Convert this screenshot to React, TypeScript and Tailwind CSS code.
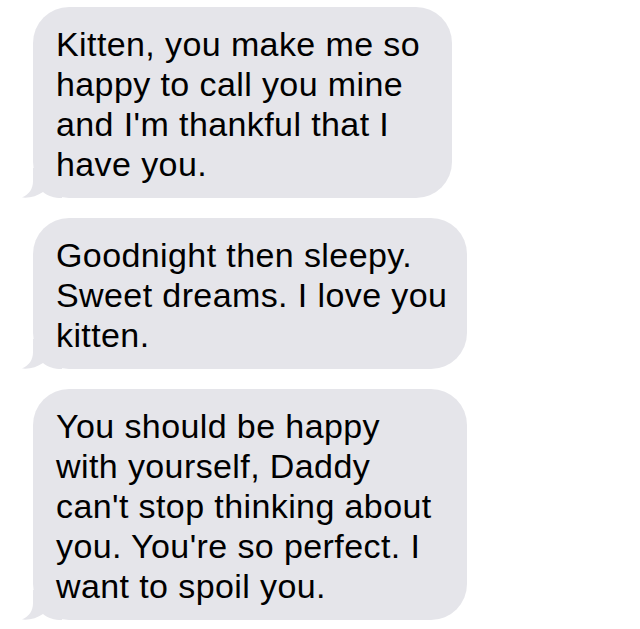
const messages = [
  {
    lines: ["Kitten, you make me so", "happy to call you mine", "and I'm thankful that I", "have you."],
    width: "w-[419px]",
  },
  {
    lines: ["Goodnight then sleepy.", "Sweet dreams. I love you", "kitten."],
    width: "w-[434px]",
  },
  {
    lines: [
      "You should be happy",
      "with yourself, Daddy",
      "can't stop thinking about",
      "you. You're so perfect. I",
      "want to spoil you.",
    ],
    width: "w-[434px]",
  },
];

function Tail() {
  return (
    <svg
      viewBox="0 0 40 30"
      className="absolute bottom-0 left-[-11px] h-[30px] w-[40px]"
      fill="#e5e5ea"
    >
      <path d="M11 0 L11 13 C11 21 7 26.5 0 29.6 C8 30.4 15 28 21 24 C26 28 32 30 40 30 L40 0 Z" />
    </svg>
  );
}

export default function App() {
  return (
    <div className="min-h-[629px] w-[640px] bg-white pt-[7px] pl-[33px] font-['Liberation_Sans',Arial,sans-serif]">
      <div className="flex flex-col gap-[20px]">
        {messages.map((m, i) => (
          <div
            key={i}
            className={`relative ${m.width} rounded-[36px] bg-[#e5e5ea] pt-[17px] pb-[14px] pl-[23px] text-[34px] leading-[40px] tracking-[0.4px] text-black`}
          >
            <Tail />
            <div className="relative whitespace-nowrap">
              {m.lines.map((l) => (
                <div key={l}>{l}</div>
              ))}
            </div>
          </div>
        ))}
      </div>
    </div>
  );
}
